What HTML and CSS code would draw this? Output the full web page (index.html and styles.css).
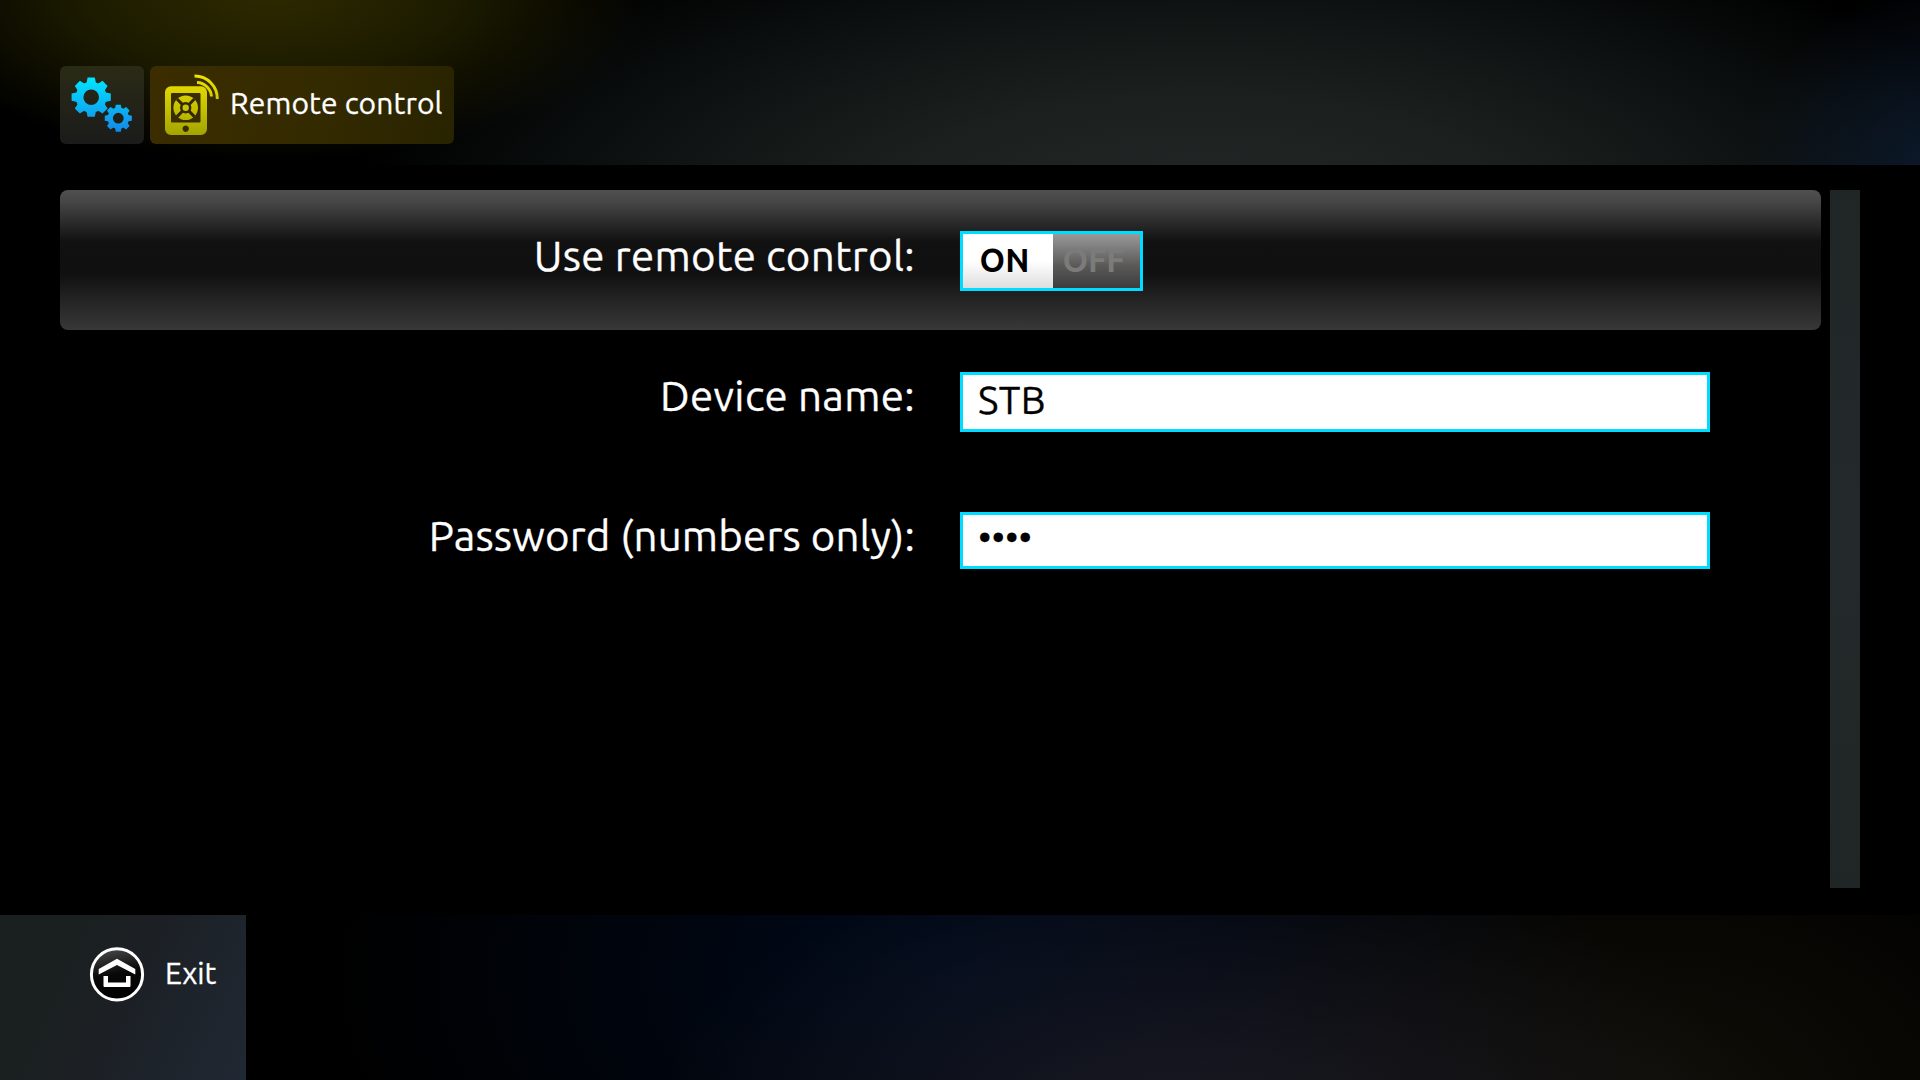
FILE: index.html
```
<!DOCTYPE html>
<html lang="en">
<head>
<meta charset="utf-8">
<title>Remote control</title>
<link rel="stylesheet" href="styles.css">
</head>
<body>
<header class="header">
  <div class="crumb crumb-settings">
    <svg class="crumb-icon" width="84" height="77" viewBox="60 66 84 77">
      <defs>
        <linearGradient id="cyan" x1="0" y1="77" x2="0" y2="132" gradientUnits="userSpaceOnUse"><stop offset="0" stop-color="#00e6ff"/><stop offset="1" stop-color="#1488e8"/></linearGradient>
        <path id="tooth" d="M-5.2-12L-3.6-19.6H3.6L5.2-12Z"/>
        <g id="gear"><circle r="11.6" fill="none" stroke="#fff" stroke-width="7.6"/>
          <g fill="#fff"><use href="#tooth"/><use href="#tooth" transform="rotate(45)"/><use href="#tooth" transform="rotate(90)"/><use href="#tooth" transform="rotate(135)"/><use href="#tooth" transform="rotate(180)"/><use href="#tooth" transform="rotate(225)"/><use href="#tooth" transform="rotate(270)"/><use href="#tooth" transform="rotate(315)"/></g></g>
        <mask id="gears" maskUnits="userSpaceOnUse" x="60" y="66" width="84" height="77"><use href="#gear" transform="translate(91.2 97.2)"/><use href="#gear" transform="translate(118.3 118.2) scale(.69)"/></mask>
      </defs>
      <rect x="60" y="66" width="84" height="77" fill="url(#cyan)" mask="url(#gears)"/>
    </svg>
  </div>
  <div class="crumb crumb-current">
    <svg class="crumb-icon" width="74" height="77" viewBox="150 66 74 77">
      <defs><linearGradient id="yellow" x1="0" y1="74" x2="0" y2="135" gradientUnits="userSpaceOnUse"><stop offset="0" stop-color="#f0e400"/><stop offset="1" stop-color="#a4a400"/></linearGradient></defs>
      <path fill="url(#yellow)" fill-rule="evenodd" d="M171 86.300H201a6 6 0 0 1 6 6V129a6 6 0 0 1-6 6H171a6 6 0 0 1-6-6V92.300a6 6 0 0 1 6-6ZM172 93a1 1 0 0 0-1 1V121.500a1 1 0 0 0 1 1H199.500a1 1 0 0 0 1-1V94a1 1 0 0 0-1-1ZM185.700 125.500a3.200 3.200 0 1 0 .01 0Z"/>
      <circle cx="185.700" cy="107.800" r="9" fill="none" stroke="url(#yellow)" stroke-width="6.600"/>
      <path d="M177 99L194.400 116.600M194.400 99L177 116.600" stroke="#332700" stroke-width="3"/>
      <circle cx="185.700" cy="107.800" r="5" fill="#332700"/><circle cx="185.700" cy="107.800" r="3.200" fill="#c8c400"/>
      <g fill="none" stroke="url(#yellow)" stroke-width="3"><path d="M194.500 76A22.600 22.600 0 0 1 217.300 99"/><path d="M197 82.600A15 15 0 0 1 211.500 96.500"/></g>
    </svg>
    <h1 class="title">Remote control</h1>
  </div>
</header>
<main class="main">
  <div class="form">
    <div class="row row-active">
      <div class="label">Use remote control:</div>
      <div class="toggle"><div class="option on">ON</div><div class="option off">OFF</div></div>
    </div>
    <div class="row">
      <div class="label">Device name:</div>
      <div class="field">STB</div>
    </div>
    <div class="row">
      <div class="label label-password">Password (numbers only):</div>
      <div class="field field-password">••••</div>
    </div>
  </div>
  <div class="scrollbar"></div>
</main>
<footer class="footer">
  <div class="exit">
    <svg class="home" width="56" height="56" viewBox="0 0 56 56">
      <defs><linearGradient id="disc" x1="0.300" y1="0" x2="0.500" y2="1"><stop offset="0" stop-color="#484848"/><stop offset=".5" stop-color="#090909"/><stop offset="1" stop-color="#000"/></linearGradient></defs>
      <circle cx="28" cy="28.400" r="25.600" fill="url(#disc)" stroke="#fff" stroke-width="3"/>
      <path fill="#fff" d="M28 12.700L46.300 22.900V28.400L28 18.900L9.700 28.400V22.900ZM14.500 29.900H19V36.400H37V29.900H41.500V39.900a1 1 0 0 1-1 1H15.500a1 1 0 0 1-1-1Z"/>
    </svg>
    <span class="exit-label">Exit</span>
  </div>
</footer>
</body>
</html>
```
FILE: styles.css
```
* { box-sizing: border-box; }
body {
  margin: 0;
  width: 1920px;
  height: 1080px;
  overflow: hidden;
  display: flex;
  flex-direction: column;
  background: #000;
  color: #fff;
  font-family: Ubuntu, "Noto Sans", sans-serif;
}
.header {
  height: 165px;
  padding: 66px 60px 0;
  display: flex;
  gap: 6px;
  background:
    radial-gradient(ellipse 380px 170px at 270px -10px, #2e2a00, #1c1b00 50%, transparent),
    radial-gradient(ellipse 220px 200px at 1960px 180px, #0d1c30, transparent),
    radial-gradient(ellipse 850px 330px at 1200px 225px, #242929, #1b201f 40%, #090c0c 80%, transparent);
}
.crumb {
  height: 78px;
  display: flex;
  align-items: flex-start;
  border-radius: 6px;
}
.crumb-settings { width: 84px; background: linear-gradient(#2a2b15, #1b1b1b); }
.crumb-current { width: 304px; background: linear-gradient(100deg, #3b2d00, #342a00 55%, #282300); }
.crumb-icon { display: block; flex: none; }
.title {
  margin: 17px 0 0 6px;
  font-size: 30px;
  font-weight: 400;
  line-height: 40px;
  letter-spacing: 0.12px;
  white-space: nowrap;
  -webkit-text-stroke: 0.3px #fff;
}
.main {
  height: 750px;
  padding: 25px 60px 27px;
  display: flex;
  gap: 9px;
}
.form { width: 1761px; }
.row {
  height: 140px;
  display: grid;
  grid-template-columns: 855px 750px;
  column-gap: 45px;
  align-items: center;
}
.row-active {
  border-radius: 8px;
  background: linear-gradient(#505050, #454545 9%, #2b2b2b 23%, #111 37%, #101010 60%, #222 77%, #383838);
}
.label {
  padding-bottom: 8px;
  text-align: right;
  font-size: 42px;
  line-height: 50px;
  letter-spacing: 0.32px;
  white-space: nowrap;
  -webkit-text-stroke: 0.3px #fff;
}
.label-password { letter-spacing: 0.17px; }
.toggle {
  width: 183px;
  height: 60px;
  margin-top: 2px;
  display: grid;
  grid-template-columns: 90px 1fr;
  border: 3px solid #00dcff;
}
.option {
  height: 54px;
  text-align: center;
  font-size: 32.5px;
  font-weight: 700;
  line-height: 53px;
}
.on { padding-right: 7px; background: linear-gradient(#fff 50%, #dedede); color: #000; }
.off { padding-right: 6px; background: linear-gradient(#999, #595857 60%, #3d3d3d); color: #7b7b7b; }
.field {
  height: 60px;
  margin-top: 4px;
  padding: 0 15px;
  border: 3px solid #00dcff;
  background: #fff;
  color: #000;
  font-size: 39px;
  line-height: 49px;
  letter-spacing: 0.3px;
  -webkit-text-stroke: 0.3px #000;
}
.field-password {
  height: 57px;
  margin-top: 0;
  font-size: 37.5px;
  line-height: 45px;
  letter-spacing: 0;
}
.scrollbar { width: 30px; background: linear-gradient(#202626, #242a2b 50%, #202525); }
.footer {
  height: 165px;
  background:
    radial-gradient(ellipse 560px 300px at 1200px 230px, #1c1b24, transparent),
    radial-gradient(ellipse 480px 320px at 1650px 190px, #110f08, transparent),
    radial-gradient(ellipse 640px 380px at 970px 60px, #000a1c, transparent);
}
.exit {
  width: 246px;
  height: 165px;
  padding: 31px 0 0 89px;
  display: flex;
  align-items: flex-start;
  background: linear-gradient(115deg, #1a1f1f 25%, #1c2025 50%, #202833);
}
.home { display: block; flex: none; }
.exit-label {
  margin: 7px 0 0 20px;
  font-size: 30px;
  line-height: 40px;
  -webkit-text-stroke: 0.3px #fff;
}
```
